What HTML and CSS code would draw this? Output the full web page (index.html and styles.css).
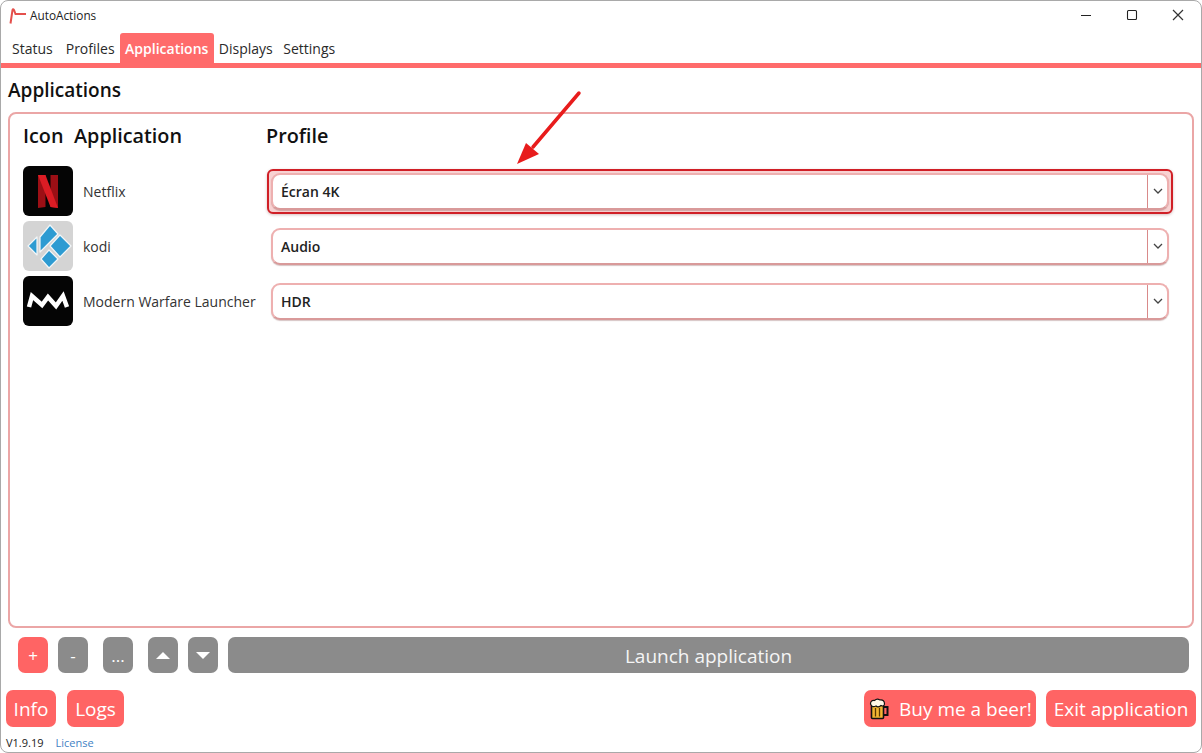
FILE: index.html
```html
<!DOCTYPE html>
<html lang="en">
<head>
<meta charset="utf-8">
<title>AutoActions</title>
<link rel="stylesheet" href="styles.css">
</head>
<body>
<div class="window">
  <header class="titlebar">
    <svg class="logo" width="18" height="16" viewBox="0 0 18 16"><path d="M1.500 15.500 L3.500 2 Q4 .5 5 2 L6.500 6 H17" fill="none" stroke="#e4504c" stroke-width="2"/></svg>
    <span class="apptitle">AutoActions</span>
    <div class="winctrls">
      <svg width="12" height="12" viewBox="0 0 12 12"><path d="M1 6.500H11" stroke="#222" stroke-width="1.200"/></svg>
      <svg width="12" height="12" viewBox="0 0 12 12"><rect x="1.500" y="1.500" width="9" height="9" rx="1" fill="none" stroke="#222" stroke-width="1.100"/></svg>
      <svg width="12" height="12" viewBox="0 0 12 12"><path d="M1 1L11 11M11 1L1 11" stroke="#333" stroke-width="1.200"/></svg>
    </div>
  </header>
  <nav class="tabs">
    <span class="tab tab-status">Status</span>
    <span class="tab tab-profiles">Profiles</span>
    <span class="tab active">Applications</span>
    <span class="tab tab-displays">Displays</span>
    <span class="tab tab-settings">Settings</span>
  </nav>
  <main class="content">
    <h1 class="heading">Applications</h1>
    <section class="panel">
      <div class="grid">
        <div class="col-head col-icon">Icon</div>
        <div class="col-head col-app">Application</div>
        <div class="col-head col-profile">Profile</div>

        <div class="appicon icon-black">
          <svg viewBox="0 0 50 50" width="50" height="50"><path d="M15 9H22.500V41L15 42Z" fill="#9c0f15"/><path d="M27.500 9H35V42L27.500 41Z" fill="#9c0f15"/><path d="M15 9H22.500L35 42L27.500 41Z" fill="#dc1c24"/></svg>
        </div>
        <div class="appname">Netflix</div>
        <div class="focusring"><div class="select"><span class="value">Écran 4K</span><span class="caret"><svg width="10" height="6" viewBox="0 0 10 6"><path d="M1 1L5 5L9 1" fill="none" stroke="#444" stroke-width="1.300"/></svg></span></div></div>

        <div class="appicon icon-grey">
          <svg viewBox="0 0 50 50" width="50" height="50"><g fill="#2d9bd2" stroke="#f2f6f8" stroke-width="1.200" stroke-linejoin="round"><path d="M5 25L14 16V34Z"/><path d="M17 16L27 4L35 13L17 31Z"/><path d="M27 25L37 14L48 25L37 36Z"/><path d="M18 38L26 29L35 38L26 47Z"/></g></svg>
        </div>
        <div class="appname">kodi</div>
        <div class="plainrow"><div class="select"><span class="value">Audio</span><span class="caret"><svg width="10" height="6" viewBox="0 0 10 6"><path d="M1 1L5 5L9 1" fill="none" stroke="#444" stroke-width="1.300"/></svg></span></div></div>

        <div class="appicon icon-black">
          <svg viewBox="0 0 50 50" width="50" height="50"><path d="M6 31L9 20L19 29L25 21L33 30L40 20L44 31" fill="none" stroke="#fff" stroke-width="4.500" stroke-linejoin="miter"/></svg>
        </div>
        <div class="appname">Modern Warfare Launcher</div>
        <div class="plainrow"><div class="select"><span class="value">HDR</span><span class="caret"><svg width="10" height="6" viewBox="0 0 10 6"><path d="M1 1L5 5L9 1" fill="none" stroke="#444" stroke-width="1.300"/></svg></span></div></div>
      </div>
    </section>
    <div class="toolbar">
      <button class="tool red w30 plus">+</button>
      <button class="tool grey w30 gap-small plus">-</button>
      <button class="tool grey w30 gap-big plus">...</button>
      <button class="tool grey w30 gap-big"><svg width="14" height="7" viewBox="0 0 14 7"><path d="M7 0L14 7H0Z" fill="#fff"/></svg></button>
      <button class="tool grey w30 gap-small"><svg width="14" height="7" viewBox="0 0 14 7"><path d="M0 0H14L7 7Z" fill="#fff"/></svg></button>
      <button class="tool grey launch">Launch application</button>
    </div>
    <div class="actions">
      <button class="action info">Info</button>
      <button class="action logs">Logs</button>
      <span class="spacer"></span>
      <button class="action beer">
        <svg width="20" height="22" viewBox="0 0 20 22"><path d="M14 9H18.500V17H14" fill="none" stroke="#111" stroke-width="2"/><rect x="2.500" y="7" width="12" height="13.500" rx="1" fill="#f2b632" stroke="#111" stroke-width="1.600"/><path d="M6.500 10V18.500M10.500 10V18.500" stroke="#5a3800" stroke-width="1.300"/><path d="M1.500 6Q1.500 2 5.500 2.500Q8 0 11 2Q15.500 1.500 15.500 6Q15 9 12 7.500Q9 10 7 8Q3 10 1.500 6Z" fill="#fff8e8" stroke="#111" stroke-width="1.200"/></svg>
        <span>Buy me a beer!</span>
      </button>
      <button class="action exit">Exit application</button>
    </div>
    <footer class="footer"><span>V1.9.19</span><a class="license" href="#">License</a></footer>
  </main>
  <svg class="arrow" width="80" height="90" viewBox="0 0 80 90"><path d="M67 7L21 61" stroke="#e81c1c" stroke-width="3.500" stroke-linecap="round"/><path d="M5 78L14 57L27 68Z" fill="#e81c1c"/></svg>
</div>
</body>
</html>
```
FILE: styles.css
```css
* { box-sizing: border-box; }
html, body { margin: 0; height: 100%; background: #fff; }
body { font-family: "Open Sans", "Noto Sans", sans-serif; color: #1a1a1a; overflow: hidden; }

.window {
  position: relative;
  width: 1202px;
  height: 753px;
  border: 1px solid #a9a9a9;
  border-radius: 8px;
  display: flex;
  flex-direction: column;
  background: #fff;
  overflow: hidden;
}

.titlebar { height: 31px; flex: none; display: flex; align-items: center; padding-left: 8px; }
.logo { flex: none; margin-right: 3px; margin-top: -2px; }
.apptitle { font-size: 11.800px; color: #222; margin-top: -3px; }
.winctrls { margin-left: auto; display: flex; gap: 34px; padding-right: 17px; margin-top: -3px; }

.tabs {
  height: 36px;
  flex: none;
  display: flex;
  align-items: flex-end;
  border-bottom: 5px solid #ff6b6b;
  padding-left: 5px;
  margin-left: -1px;
  margin-right: -1px;
}
.tab { font-size: 14px; height: 30px; line-height: 31px; padding: 0 5px; color: #2a2a2a; white-space: nowrap; }
.tab-status { padding: 0 8px 0 7px; }
.tab-profiles { padding: 0 5px; }
.tab.active { background: #ff6b6b; color: #fff; font-weight: 600; border-radius: 3px 3px 0 0; padding: 0 5.500px; }
.tab-displays { padding: 0 5px; }
.tab-settings { padding-left: 5.500px; }

.content { flex: 1; min-height: 0; display: flex; flex-direction: column; padding: 0 5px; }
.heading { margin: 9px 0 0 2px; font-size: 19px; line-height: 26px; font-weight: 600; color: #111; }
.panel {
  height: 516px;
  flex: none;
  margin: 9px 2px 0;
  border: 2px solid #eba6a6;
  border-radius: 8px;
}
.grid {
  display: grid;
  grid-template-columns: 50px 178px 1fr;
  column-gap: 10px;
  row-gap: 5px;
  padding: 9px 23px 0 13px;
  align-items: center;
}
.col-head { font-size: 19.800px; line-height: 26px; font-weight: 600; color: #111; margin-bottom: 12px; white-space: nowrap; }
.col-app { margin-left: -9px; }
.col-profile { margin-left: -5px; }

.appicon { width: 50px; height: 50px; border-radius: 6px; overflow: hidden; }
.appicon svg { display: block; }
.icon-black { background: #050505; }
.icon-grey { background: #d4d4d4; }
.appname { font-size: 14px; color: #333; white-space: nowrap; }

.select {
  height: 37px;
  border: 2px solid #eeb0b0;
  border-bottom-color: #d99a9a;
  border-radius: 9px;
  display: flex;
  align-items: center;
  background: #fff;
  box-shadow: 0 1px 1px rgba(120,60,60,.3);
}
.value { flex: 1; font-size: 14px; font-weight: 600; padding-left: 8px; color: #222; }
.caret { flex: none; width: 20px; height: 100%; border-left: 1px solid #d98a8a; display: flex; align-items: center; justify-content: center; }
.focusring {
  margin: 0 -4px;
  padding: 2px;
  border: 2px solid #d01f26;
  border-radius: 6px;
  background: #f8d2d2;
  box-shadow: 0 1px 3px rgba(120,40,40,.3);
}
.plainrow { margin: 0; }

.toolbar { display: flex; height: 36px; flex: none; margin: 9px 0 0 12px; padding-right: 7px; }
button { font-family: inherit; border: 0; padding: 0; color: #fff; cursor: pointer; }
.tool { height: 36px; border-radius: 7px; font-size: 14px; display: flex; align-items: center; justify-content: center; }
.plus { font-size: 17px; }
.w30 { width: 30px; }
.red { background: #ff6464; }
.grey { background: #8b8b8b; }
.gap-small { margin-left: 10px; }
.gap-big { margin-left: 15px; }
.launch { flex: 1; margin-left: 10px; font-size: 19px; color: #f5f5f5; padding-top: 1px; }

.actions { display: flex; height: 37px; flex: none; margin-top: 17px; }
.action { height: 37px; background: #ff6464; border-radius: 7px; font-size: 19px; white-space: nowrap; display: flex; align-items: center; justify-content: center; padding-top: 1px; }
.info { width: 50px; }
.logs { width: 57px; margin-left: 11px; }
.spacer { flex: 1; }
.beer { width: 172px; gap: 10px; justify-content: flex-start; padding-left: 5px; }
.exit { width: 150px; margin-left: 10px; }

.footer { display: flex; align-items: center; font-size: 11px; height: 16px; margin-top: 7px; color: #222; }
.license { color: #3f82c4; text-decoration: none; margin-left: 12px; }

.arrow { position: absolute; left: 511px; top: 85px; pointer-events: none; }
```
